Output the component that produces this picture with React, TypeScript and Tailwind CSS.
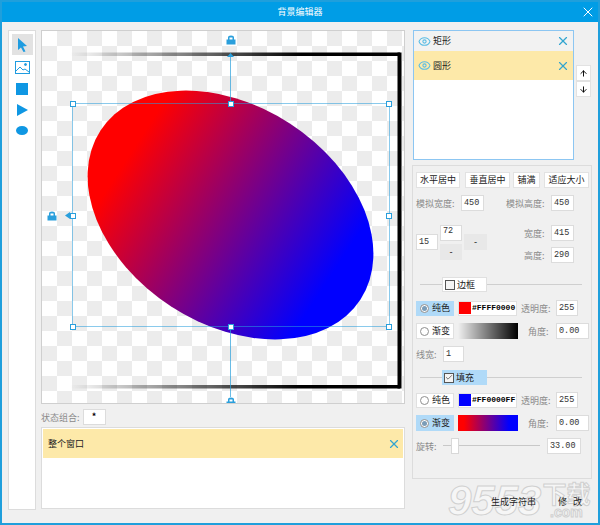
import { Eye, X, Check, ArrowUp, ArrowDown } from "lucide-react";
import type { ReactNode } from "react";

const font = "font-['Noto_Sans_CJK_SC','Liberation_Sans',sans-serif]";

function Field({ children, className = "" }: { children: ReactNode; className?: string }) {
  return (
    <div className={`flex h-[16px] shrink-0 items-center border border-[#dcdcdc] bg-white pl-[2px] font-['Liberation_Mono',monospace] text-[8.5px] text-[#333] ${className}`}>
      {children}
    </div>
  );
}

function Label({ children, className = "" }: { children: ReactNode; className?: string }) {
  return <span className={`shrink-0 whitespace-nowrap text-[9px] leading-none text-[#8a8a8a] ${className}`}>{children}</span>;
}

function Btn({ children, className = "" }: { children: ReactNode; className?: string }) {
  return (
    <div className={`flex h-[16px] items-center justify-center border border-[#e2e2e2] bg-white text-[9px] text-[#222] ${className}`}>
      {children}
    </div>
  );
}

function Radio({ label, on, className = "" }: { label: string; on?: boolean; className?: string }) {
  return (
    <div className={`flex h-[15px] w-[38px] shrink-0 items-center gap-[3px] border pl-[3px] text-[9px] text-[#222] ${on ? "border-[#b0daf8] bg-[#b0daf8]" : "border-[#e0e0e0] bg-white"} ${className}`}>
      <span className="flex size-[9px] items-center justify-center rounded-full border border-[#8f8f8f] bg-white">
        {on && <span className="size-[5px] rounded-full bg-[#7a9cb8]" />}
      </span>
      {label}
    </div>
  );
}

function Divider({ label, checked, on }: { label: string; checked?: boolean; on?: boolean }) {
  return (
    <div className="flex h-[15px] items-center pl-[7px] pr-[9px]">
      <div className="h-px w-[22px] bg-[#cfcfcf]" />
      <div className={`flex h-[15px] w-[45px] items-center gap-[2px] pl-[2px] text-[9px] text-[#222] ${on ? "bg-[#b0daf8]" : "border border-[#e0e0e0] bg-white"}`}>
        <span className="flex size-[10px] items-center justify-center border border-[#555] bg-[#f4f4f4]">
          {checked && <Check size={9} strokeWidth={2} className="text-[#333]" />}
        </span>
        {label}
      </div>
      <div className="h-px flex-1 bg-[#cfcfcf]" />
    </div>
  );
}

function LayerRow({ label, active }: { label: string; active?: boolean }) {
  return (
    <div className={`flex items-center pl-[4px] pr-[3px] text-[9px] text-[#222] ${active ? "h-[29px] bg-[#fde9a9]" : "h-[20px] bg-[#f2f2f2]"}`}>
      <Eye size={13} className="text-[#5bbce4]" />
      <span className="ml-[2px]">{label}</span>
      <X size={14} strokeWidth={2} className="ml-auto text-[#33a5d0]" />
    </div>
  );
}

function Handle({ className }: { className: string }) {
  return <div className={`absolute size-[6px] border border-[#2a9fdc] bg-white ${className}`} />;
}

function LockMark({ className }: { className: string }) {
  return (
    <svg width="10" height="10" viewBox="0 0 10 10" className={`absolute ${className}`}>
      <path d="M2 5V2.5C2 1.2 3 .5 5 .5s3 .7 3 2V5H6.5V2.5h-3V5z" fill="#2a9fdc" />
      <rect x="0.5" y="4.5" width="9" height="5" fill="#2a9fdc" />
    </svg>
  );
}

function Canvas() {
  return (
    <div className="relative h-[374px] w-[364px] overflow-hidden border border-[#cfcfcf] bg-white bg-[conic-gradient(#ececec_25%,#ffffff_0_50%,#ececec_0_75%,#ffffff_0)] bg-[length:30px_30px]">
      <svg width="362" height="372" viewBox="42 31 362 372" className="absolute left-0 top-0">
        <defs>
          <linearGradient id="top" x1="0" x2="1" y1="0" y2="0">
            <stop offset="0" stopColor="#000" stopOpacity="0" />
            <stop offset="0.7" stopColor="#000" />
          </linearGradient>
          <linearGradient id="fillg" gradientUnits="userSpaceOnUse" x1="-140" x2="140" y1="0" y2="0">
            <stop offset="0.08" stopColor="#ff0000" />
            <stop offset="0.92" stopColor="#0000ff" />
          </linearGradient>
        </defs>
        <rect x="70" y="52.5" width="330" height="3.5" fill="url(#top)" />
        <rect x="70" y="385" width="330" height="3.5" fill="url(#top)" />
        <rect x="397.5" y="52.5" width="4" height="336" fill="#000" />
        <g transform="translate(230.5 215) rotate(33)">
          <ellipse rx="155" ry="109" fill="url(#fillg)" />
        </g>
        <rect x="72.5" y="103.5" width="317" height="223" fill="none" stroke="#2a9fdc" strokeOpacity="0.55" />
        <path d="M230.5 56V103.5M230.5 327V397M69 215.5H72" stroke="#2a9fdc" strokeOpacity="0.7" />
        <path d="M227 57h7l-3.500-4z" fill="#2a9fdc" />
        <path d="M65 215.500l5-3.500v7z" fill="#2a9fdc" />
      </svg>
      {/* resize handles */}
      <Handle className="left-[28px] top-[70px]" />
      <Handle className="left-[186px] top-[70px]" />
      <Handle className="left-[344px] top-[70px]" />
      <Handle className="left-[28px] top-[182px]" />
      <Handle className="left-[344px] top-[182px]" />
      <Handle className="left-[28px] top-[293px]" />
      <Handle className="left-[186px] top-[293px]" />
      <Handle className="left-[344px] top-[293px]" />
      {/* anchor locks */}
      <LockMark className="left-[184px] top-[4px]" />
      <LockMark className="left-[5px] top-[180px]" />
      <LockMark className="left-[184px] top-[366px]" />
    </div>
  );
}

export default function App() {
  return (
    <div className={`relative flex h-[525px] w-[600px] flex-col overflow-hidden border-2 border-[#1f9fdc] bg-[#f0f0f0] ${font}`}>
      <div className="relative flex h-[20px] shrink-0 items-center justify-center bg-[#009de6] text-[9px] text-white">
        背景编辑器
        <X size={16} strokeWidth={1.5} className="absolute right-[2px] top-[2px]" />
      </div>

      <div className="flex flex-1 pl-[6px] pt-[8px]">
        {/* tool strip */}
        <div className="flex h-[480px] w-[28px] shrink-0 flex-col items-center border border-[#dcdcdc] bg-white pt-[3px]">
          <div className="flex size-[21px] items-center justify-center bg-[#e2e2e2]">
            <svg width="12" height="15" viewBox="0 0 12 15"><path d="M2 1l9 8-4 .5 2.500 5-2 .5L5 10.500 2 13z" fill="#1f9ce0" /></svg>
          </div>
          <svg className="mt-[5px]" width="15" height="15" viewBox="0 0 15 15" fill="none" stroke="#1f9ce0"><rect x=".5" y="1.5" width="14" height="12" /><path d="M1 11l4-4 3 3 2-1 4 3" /><circle cx="10.500" cy="4.500" r="1" fill="#1f9ce0" /></svg>
          <div className="mt-[8px] size-[12px] bg-[#0f97e3]" />
          <svg className="mt-[9px]" width="11" height="12" viewBox="0 0 11 12"><path d="M0 0l11 6-11 6z" fill="#0f97e3" /></svg>
          <svg className="mt-[10px]" width="12" height="9" viewBox="0 0 12 9"><ellipse cx="6" cy="4.500" rx="6" ry="4.500" fill="#0f97e3" /></svg>
        </div>

        {/* canvas and state column */}
        <div className="ml-[5px] flex w-[364px] shrink-0 flex-col">
          <Canvas />
          <div className="flex h-[23px] items-start gap-[3px] pt-[5px]">
            <Label className="mt-[4px]">状态组合:</Label>
            <div className="flex h-[16px] w-[23px] items-center justify-center border border-[#dcdcdc] bg-white text-[9px] font-bold">*</div>
          </div>
          <div className="h-[82px] border border-[#dcdcdc] bg-white p-[1px]">
            <div className="flex h-[29px] items-center bg-[#fde9a9] pl-[5px] pr-[2px] text-[9px] text-[#222]">
              整个窗口
              <X size={14} strokeWidth={2} className="ml-auto text-[#33a5d0]" />
            </div>
          </div>
        </div>

        {/* right column */}
        <div className="ml-[7px] flex w-[180px] flex-col">
          <div className="ml-[1px] flex items-start gap-[2px]">
            <div className="h-[130px] w-[161px] border border-[#8cc6f2] bg-white">
              <LayerRow label="矩形" />
              <LayerRow label="圆形" active />
            </div>
            <div className="mt-[35px] flex w-[15px] flex-col">
              <div className="flex h-[16px] items-center justify-center border border-[#e2e2e2] bg-white"><ArrowUp size={9} strokeWidth={2.5} /></div>
              <div className="flex h-[16px] items-center justify-center border border-[#e2e2e2] bg-white"><ArrowDown size={9} strokeWidth={2.5} /></div>
            </div>
          </div>

          <div className="mt-[5px] flex h-[314px] w-[180px] flex-col border border-[#dcdcdc] pt-[6px]">
            <div className="flex pl-[3px]">
              <Btn className="w-[44px]">水平居中</Btn>
              <Btn className="ml-[5px] w-[45px]">垂直居中</Btn>
              <Btn className="ml-[3px] w-[27px]">铺满</Btn>
              <Btn className="ml-[4px] w-[45px] bg-[#e2e2e2]">适应大小</Btn>
            </div>

            <div className="mt-[7px] flex items-center pl-[3px]">
              <Label className="w-[45px]">模拟宽度:</Label>
              <Field className="w-[23px]">450</Field>
              <Label className="ml-[22px] w-[45px]">模拟高度:</Label>
              <Field className="w-[23px]">450</Field>
            </div>

            <div className="mt-[14px] flex h-[39px] pl-[3px]">
              <Field className="mt-[9px] w-[22px]">15</Field>
              <div className="ml-[2px] flex w-[22px] flex-col">
                <Field className="w-[22px] pb-[3px]">72</Field>
                <div className="mt-[3px] flex h-[16px] items-center justify-center bg-[#e8e8e8] text-[9px]">-</div>
              </div>
              <div className="ml-[2px] mt-[9px] flex h-[16px] w-[23px] items-center justify-center bg-[#e8e8e8] text-[9px]">-</div>
              <div className="ml-[37px] flex flex-col gap-[6px]">
                <div className="flex items-center"><Label className="w-[27px]">宽度:</Label><Field className="w-[23px]">415</Field></div>
                <div className="flex items-center"><Label className="w-[27px]">高度:</Label><Field className="w-[23px]">290</Field></div>
              </div>
            </div>

            <div className="mt-[13px]"><Divider label="边框" /></div>

            <div className="mt-[8px] flex items-center pl-[3px]">
              <Radio label="纯色" on />
              <div className="ml-[4px] flex h-[15px] w-[59px] items-center gap-[1px] border border-[#e0e0e0] bg-white">
                <span className="h-[12px] w-[12px] shrink-0 bg-[#ff0000]" />
                <span className="font-['Liberation_Mono',monospace] text-[8px] font-bold leading-none">#FFFF0000</span>
              </div>
              <Label className="ml-[4px] w-[35px]">透明度:</Label>
              <Field className="h-[15px] w-[22px]">255</Field>
            </div>
            <div className="mt-[7px] flex items-center pl-[3px]">
              <Radio label="渐变" className="h-[16px]" />
              <div className="ml-[4px] h-[16px] w-[60px] bg-linear-to-r/srgb from-[#f0f0f0] to-black" />
              <Label className="ml-[10px] w-[28px]">角度:</Label>
              <Field className="w-[33px]">0.00</Field>
            </div>

            <div className="mt-[7px] flex items-center pl-[3px]">
              <Label className="w-[27px]">线宽:</Label>
              <Field className="h-[15px] w-[21px]">1</Field>
            </div>

            <div className="mt-[8px]"><Divider label="填充" checked on /></div>

            <div className="mt-[7px] flex items-center pl-[3px]">
              <Radio label="纯色" />
              <div className="ml-[4px] flex h-[15px] w-[59px] items-center gap-[1px] border border-[#e0e0e0] bg-white">
                <span className="h-[12px] w-[12px] shrink-0 bg-[#0000ff]" />
                <span className="font-['Liberation_Mono',monospace] text-[8px] font-bold leading-none">#FF0000FF</span>
              </div>
              <Label className="ml-[4px] w-[35px]">透明度:</Label>
              <Field className="h-[15px] w-[22px]">255</Field>
            </div>
            <div className="mt-[7px] flex items-center pl-[3px]">
              <Radio label="渐变" on className="h-[16px]" />
              <div className="ml-[4px] h-[16px] w-[60px] bg-linear-to-r/srgb from-[#ff0000] from-[10%] to-[#0000ff] to-[85%]" />
              <Label className="ml-[10px] w-[28px]">角度:</Label>
              <Field className="w-[33px]">0.00</Field>
            </div>

            <div className="mt-[7px] flex items-center pl-[3px]">
              <Label className="w-[27px]">旋转:</Label>
              <div className="relative h-[16px] w-[97px]">
                <div className="absolute left-0 right-0 top-[7px] h-px bg-[#c8c8c8]" />
                <div className="absolute left-[8px] top-0 h-[16px] w-[8px] border border-[#d8d8d8] bg-white" />
              </div>
              <Field className="ml-[7px] w-[34px]">33.00</Field>
            </div>
          </div>

          <div className="relative z-10 mt-[16px] flex pl-[79px] text-[9px] text-[#222]">
            <span>生成字符串</span>
            <span className="ml-[22px] tracking-[2px]">修 改</span>
          </div>
        </div>
      </div>

      {/* site watermark over the corner */}
      <div className="absolute bottom-[1px] left-[446px] flex items-start text-[#f6f6f6] [-webkit-text-stroke:1px_#d0d0d0]">
        <span className="font-['Liberation_Sans',sans-serif] text-[42px] font-bold italic leading-none">9553</span>
        <div className="ml-[1px] flex flex-col items-center pt-[1px]">
          <span className="text-[24px] font-bold leading-none">下载</span>
          <span className="font-['Liberation_Sans',sans-serif] text-[14px] font-bold leading-none">.com</span>
        </div>
      </div>
    </div>
  );
}
